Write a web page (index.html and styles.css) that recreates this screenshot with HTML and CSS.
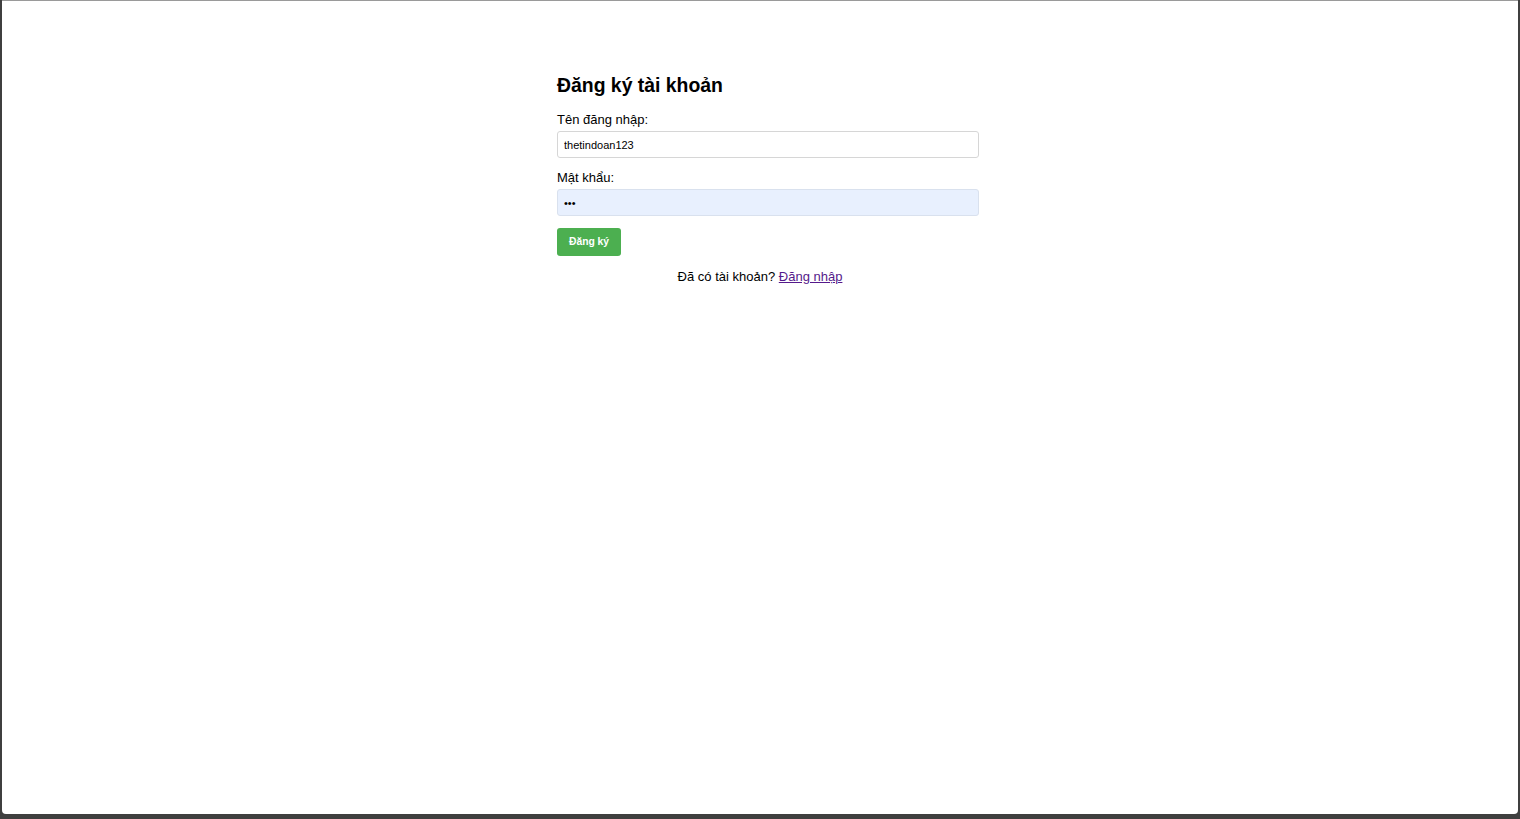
FILE: index.html
```html
<!DOCTYPE html>
<html lang="vi">
<head>
<meta charset="utf-8">
<title>Đăng ký tài khoản</title>
<link rel="stylesheet" href="styles.css">
</head>
<body>
<div class="window">
  <div class="container">
    <h2 class="title">Đăng ký tài khoản</h2>
    <form class="form">
      <div class="group">
        <label class="label" for="u">Tên đăng nhập:</label>
        <input class="field" id="u" type="text" value="thetindoan123">
      </div>
      <div class="group">
        <label class="label" for="p">Mật khẩu:</label>
        <input class="field autofill" id="p" type="password" value="abc">
      </div>
      <button class="btn" type="button">Đăng ký</button>
    </form>
    <p class="switch">Đã có tài khoản? <a class="link" href="#">Đăng nhập</a></p>
  </div>
</div>
</body>
</html>
```

FILE: styles.css
```css
html, body {
  margin: 0;
  padding: 0;
  height: 100%;
}
body {
  background: #3f3f3f;
  font-family: "Liberation Sans", Arial, sans-serif;
  color: #000;
}
.window {
  box-sizing: border-box;
  height: calc(100% - 5px);
  margin: 0 2px;
  background: #fff;
  border-top: 1px solid #9a9a9a;
  border-radius: 0 0 4px 4px;
  padding-top: 73px;
}
.container {
  width: 406px;
  margin: 0 auto;
}
.title {
  font-size: 19.4px;
  font-weight: bold;
  line-height: 23px;
  margin: 0 0 15px 0;
}
.form {
  margin: 0;
}
.group {
  margin-bottom: 12px;
}
.label {
  display: block;
  font-size: 13px;
  line-height: 15px;
  margin-bottom: 4px;
}
.field {
  display: block;
  box-sizing: border-box;
  width: 422px;
  height: 27px;
  padding: 6px 10px 6px 6px;
  border: 1px solid #d6d6d6;
  border-radius: 3px;
  font-family: "Liberation Sans", Arial, sans-serif;
  font-size: 11px;
  line-height: 13px;
  margin: 0;
  color: #000;
  background: #fff;
  outline: none;
}
.autofill {
  background: #e8f0fe;
  border-color: #d9e1ee;
}
.btn {
  display: block;
  background: #4caf50;
  color: #fff;
  border: none;
  border-radius: 3px;
  font-family: "Liberation Sans", Arial, sans-serif;
  font-size: 10.3px;
  font-weight: bold;
  line-height: 14px;
  height: 28px;
  padding: 7px 12px;
  margin: 0;
  cursor: pointer;
}
.switch {
  margin: 13px 0 0 0;
  text-align: center;
  font-size: 13px;
  line-height: 16px;
}
.link {
  color: #551a8b;
}
```
